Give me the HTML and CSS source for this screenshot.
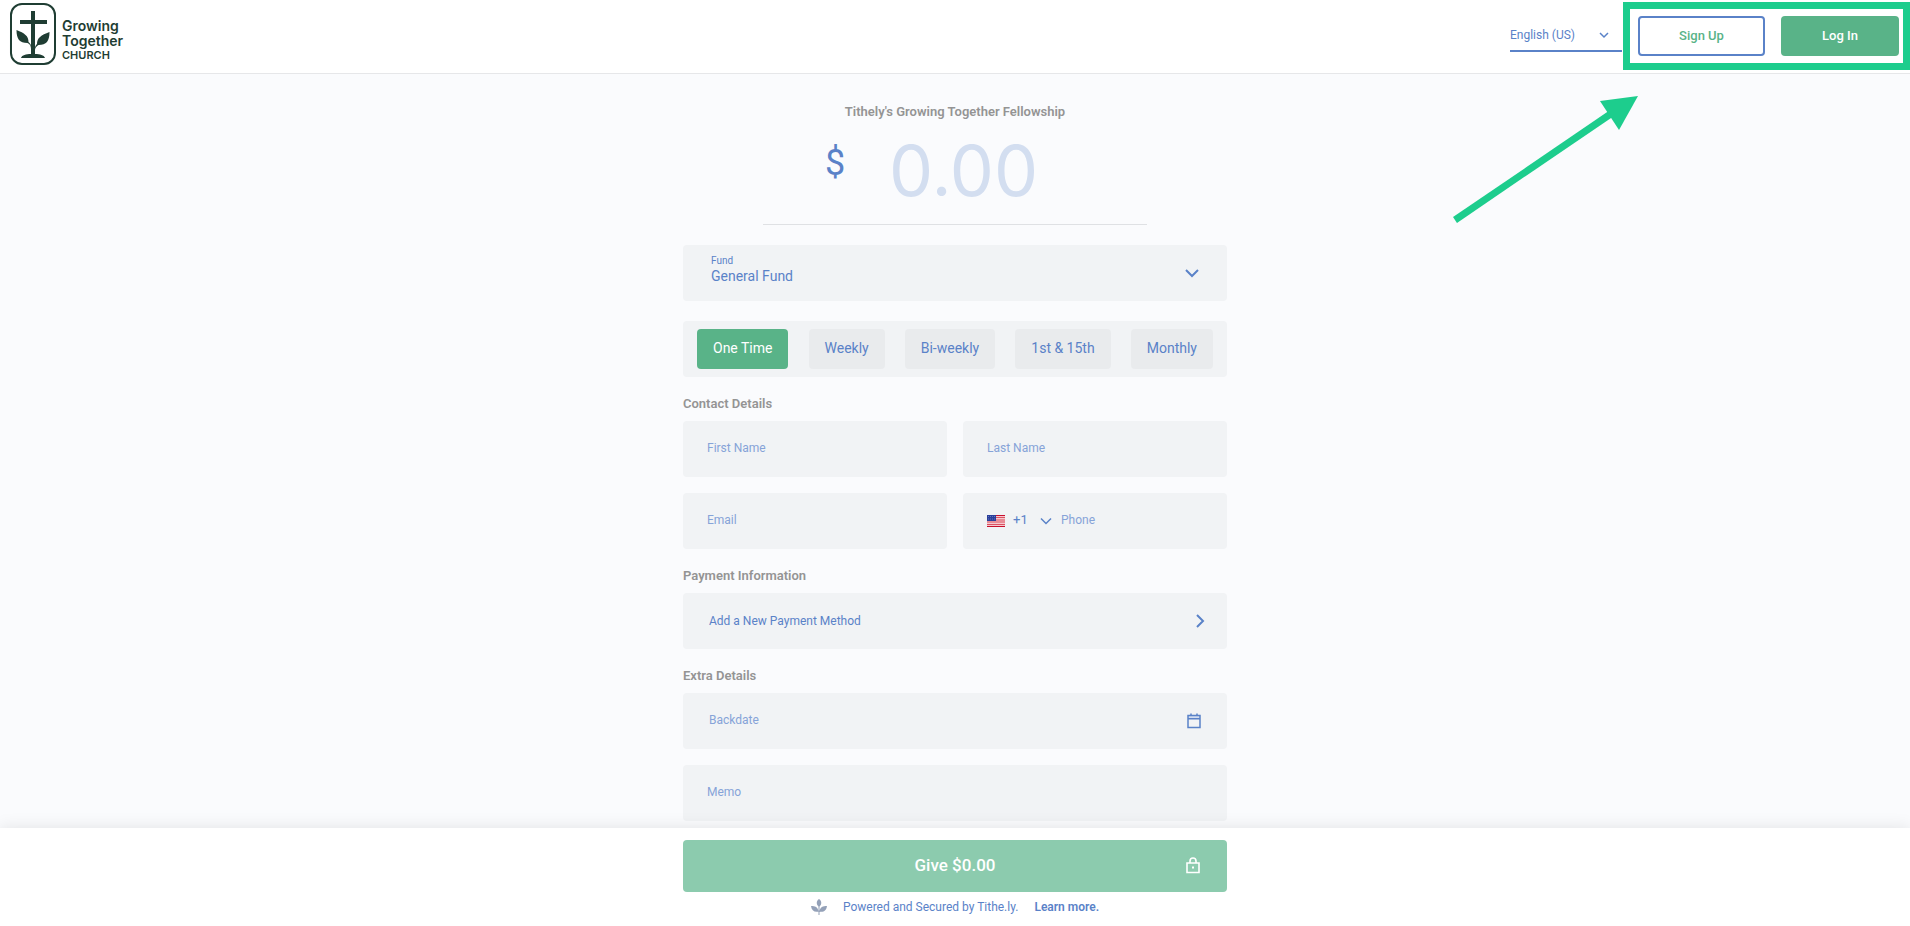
FILE: index.html
```html
<!DOCTYPE html>
<html lang="en">
<head>
<meta charset="utf-8">
<title>Tithely's Growing Together Fellowship</title>
<link rel="stylesheet" href="styles.css">
</head>
<body>
<header class="topbar">
  <a class="brand" href="#" aria-label="Growing Together Church">
    <svg class="brand-mark" viewBox="0 0 48 64" aria-hidden="true">
      <rect x="2" y="2" width="44" height="60" rx="11" fill="none" stroke="#1f3d33" stroke-width="2"/>
      <path d="M22 9h4v9h12v4H26v24c0-2 1-3 2-4c0-6 4-9 12.500-12c0 9-3 13-11 13c-2 1-3.500 3-3.500 5v4c5 0 9 1 10 4H12c1-3 5-4 10-4v-5c0-3-1-5-3.500-6c-8 0-11-4-11-13c8 3 12 6 12 12c1 1 2.500 2 2.500 4V22H11v-4h11z" fill="#1f3d33"/>
    </svg>
    <span class="brand-name"><span>Growing</span><span>Together</span><span class="brand-sub">CHURCH</span></span>
  </a>
  <div class="topbar-actions">
    <div class="language">
      <select aria-label="Language"><option>English (US)</option></select>
      <svg class="chevron-small" viewBox="0 0 10 6" aria-hidden="true"><path d="M1 1l4 4 4-4"/></svg>
    </div>
    <div class="auth">
      <button class="auth-button signup" type="button">Sign Up</button>
      <button class="auth-button login" type="button">Log In</button>
      <svg class="pointer" viewBox="0 0 186 130" aria-hidden="true"><path d="M2 124L162 15" stroke="#1dcd8d" stroke-width="7"/><path d="M147 5L185 0 166 34z" fill="#1dcd8d"/></svg>
    </div>
  </div>
</header>
<main class="page">
  <form class="giving" id="giving">
    <h1 class="org">Tithely's Growing Together Fellowship</h1>
    <div class="amount">
      <label class="currency" for="amount">$</label>
      <input id="amount" type="text" placeholder="0.00">
    </div>
    <div class="field fund">
      <div class="fund-text">
        <label for="fund">Fund</label>
        <select id="fund"><option>General Fund</option></select>
      </div>
      <svg class="chevron" viewBox="0 0 14 9" aria-hidden="true"><path d="M1 1l6 6 6-6"/></svg>
    </div>
    <div class="field frequency">
      <button type="button" class="selected">One Time</button>
      <button type="button">Weekly</button>
      <button type="button">Bi-weekly</button>
      <button type="button">1st &amp; 15th</button>
      <button type="button">Monthly</button>
    </div>
    <h2>Contact Details</h2>
    <div class="contact">
      <input class="field" type="text" placeholder="First Name" aria-label="First Name">
      <input class="field" type="text" placeholder="Last Name" aria-label="Last Name">
      <input class="field" type="email" placeholder="Email" aria-label="Email">
      <div class="field phone">
        <svg class="flag" viewBox="0 0 18 12" aria-hidden="true"><path fill="#f5c9ce" d="M0 0h18v12H0z"/><path fill="#e98b95" d="M0 4h18v4H0z"/><path fill="#c8102e" d="M0 0h18v1H0zM0 11h18v1H0z"/><path fill="#dc5263" d="M0 2h18v1H0zM0 9h18v1H0z"/><path fill="#2a3f9b" d="M0 0h9v6H0z"/><path d="M1 1.500h7M1 4h7" stroke="#6475bb" stroke-dasharray="1 1"/></svg>
        <select class="dial" aria-label="Country code"><option>+1</option></select>
        <svg class="chevron-small" viewBox="0 0 10 6" aria-hidden="true"><path d="M0 0.500l5 5 5-5"/></svg>
        <input type="tel" placeholder="Phone" aria-label="Phone">
      </div>
    </div>
    <h2>Payment Information</h2>
    <button class="field row-button" type="button">Add a New Payment Method
      <svg class="chevron-right" viewBox="0 0 9 14" aria-hidden="true"><path d="M1 1l6 6-6 6"/></svg>
    </button>
    <h2>Extra Details</h2>
    <div class="field date">
      <input type="text" placeholder="Backdate" aria-label="Backdate">
      <svg class="calendar" viewBox="0 0 14 16" aria-hidden="true"><path d="M1 2.500h12v3H1z" fill="#d2dcf0"/><path d="M1 2.500h12v12H1zM1 5.800h12M4 .5v2M10 .5v2" fill="none" stroke="#5a82c8" stroke-width="1.500"/></svg>
    </div>
    <input class="field memo" type="text" placeholder="Memo" aria-label="Memo">
  </form>
</main>
<footer class="checkout">
  <button class="give" type="submit" form="giving">Give $0.00
    <svg class="lock" viewBox="0 0 16 18" aria-hidden="true"><path d="M2 7h12v9.500H2zM5 7V5a3 3 0 0 1 6 0v2" fill="none" stroke="#fff" stroke-width="1.600"/><path d="M7 10.500h2v2H7z" fill="#fff"/></svg>
  </button>
  <p class="powered">
    <svg class="leaf" viewBox="0 0 16 16" aria-hidden="true"><path d="M8 0c3 2 3 5.500 0 8c-3-2.500-3-6 0-8zM0 7c4 0 7 1 7.500 5.500c-4 1-7-1-7.500-5.500zM16 7c-4 0-7 1-7.500 5.500c4 1 7-1 7.500-5.500zM7.500 7h1v9h-1z" fill="#94a1b8"/></svg>
    <span>Powered and Secured by Tithe.ly.</span>
    <a href="#">Learn more.</a>
  </p>
</footer>
</body>
</html>
```
FILE: styles.css
```css
* { box-sizing: border-box; }
body {
  margin: 0;
  min-height: 100vh;
  display: flex;
  flex-direction: column;
  background: #fafbfd;
  color: #5a82c8;
  font-family: Roboto, "Liberation Sans", sans-serif;
  font-size: 12px;
  line-height: 16px;
}
button, input, select { font: inherit; color: inherit; border: 0; background: none; padding: 0; margin: 0; min-width: 0; }
select { appearance: none; }
svg { display: block; flex: none; }
a { color: inherit; text-decoration: none; }

.topbar {
  display: flex;
  justify-content: space-between;
  align-items: flex-start;
  height: 74px;
  padding: 0 11px 0 9px;
  background: #fff;
  border-bottom: 1px solid #e6e7e9;
}
.brand { display: flex; gap: 5px; padding-top: 2px; color: #1f3d33; font-family: Inter, "Liberation Sans", sans-serif; }
.brand-mark { width: 48px; height: 64px; }
.brand-name { display: flex; flex-direction: column; padding-top: 16px; font-size: 14px; line-height: 15px; font-weight: 600; }
.brand-sub { font-size: 11px; }

.topbar-actions { display: flex; gap: 16px; padding-top: 16px; }
.language { display: flex; align-items: center; width: 112px; height: 36px; padding-top: 4px; border-bottom: 2px solid #5a82c8; }
.language select { flex: 1; height: 30px; }
.language .chevron-small { margin-right: 13px; }
.chevron-small { width: 10px; height: 6px; overflow: visible; }
.chevron-small path, .chevron path, .chevron-right path { fill: none; stroke: #5a82c8; stroke-width: 2; }
.chevron-small path { stroke-width: 1.5; }
.auth { position: relative; display: flex; gap: 16px; }
.auth::before { content: ""; position: absolute; inset: -14px -11px -14px -15px; border: 7px solid #1dcd8d; pointer-events: none; }
.auth-button { height: 40px; border-radius: 4px; font-size: 13px; font-weight: 500; }
.signup { width: 127px; border: 2px solid #5a82c8; color: #59b388; }
.login { width: 118px; background: #59b388; color: #fff; }
.pointer { position: absolute; right: 260px; top: 80px; width: 186px; height: 130px; pointer-events: none; }

.page { flex: 1; padding: 0 16px 7px; }
.giving { max-width: 544px; margin: 0 auto; }
h1, h2 { margin: 0; font-size: 13px; line-height: 16px; font-weight: 600; color: #949494; }
.org { padding-top: 30px; text-align: center; }
.amount { display: flex; width: 384px; height: 105px; margin: 0 auto 20px; padding-left: 62px; border-bottom: 1px solid #dfe1e4; }
.currency { width: 64px; padding-top: 23px; font-size: 36px; line-height: 40px; }
.amount input { flex: 1; height: 100px; font-family: Inter, "Liberation Sans", sans-serif; font-size: 70px; line-height: 80px; }
.amount input::placeholder { color: #d3def0; }
.field { width: 100%; height: 56px; border-radius: 4px; background: #f1f3f5; }
.fund { display: flex; align-items: center; justify-content: space-between; padding: 0 28px; }
.fund-text { display: flex; flex: 1; flex-direction: column; padding-bottom: 6px; }
.fund label { font-size: 10px; line-height: 12px; }
.fund select { height: 18px; font-size: 14px; line-height: 18px; }
.chevron { width: 14px; height: 9px; }
.frequency { display: flex; justify-content: space-between; align-items: center; margin-top: 20px; padding: 0 14px; }
.frequency button { height: 40px; padding: 0 16px 2px; border-radius: 4px; background: #e9ebed; font-size: 14px; }
.frequency .selected { background: #59b388; color: #fff; }
h2 { padding: 19px 0 9px; }
.contact { display: grid; grid-template-columns: repeat(2, minmax(0, 1fr)); gap: 16px; }
input::placeholder { color: #86a3d8; opacity: 1; }
input.field { padding: 0 24px 2px; }
.phone { display: flex; align-items: center; padding: 0 24px; }
.flag { width: 18px; height: 12px; }
.dial { width: 36px; height: 20px; padding: 0 0 2px 8px; font-size: 13px; }
.phone input { flex: 1; height: 100%; padding: 0 0 2px 10px; }
.row-button, .date { display: flex; align-items: center; justify-content: space-between; padding: 0 26px; }
.row-button { padding-right: 22px; }
.chevron-right { width: 9px; height: 14px; }
.date input { flex: 1; height: 100%; padding-bottom: 2px; }
.calendar { width: 14px; height: 16px; }
.memo { display: block; margin-top: 16px; }

.checkout { display: flex; flex-direction: column; align-items: center; position: sticky; bottom: 0; padding: 12px 16px 11px; background: #fff; box-shadow: 0 0 16px rgba(0, 0, 0, 0.1); }
.give { position: relative; width: 100%; max-width: 544px; height: 52px; padding-bottom: 2px; border-radius: 4px; background: #8ccbae; color: #fff; font-size: 17px; font-weight: 500; }
.lock { position: absolute; right: 26px; top: 16px; width: 16px; height: 18px; }
.powered { display: flex; align-items: center; gap: 16px; margin: 7px 0 0; }
.leaf { width: 16px; height: 16px; }
.powered a { font-weight: 600; }
```
